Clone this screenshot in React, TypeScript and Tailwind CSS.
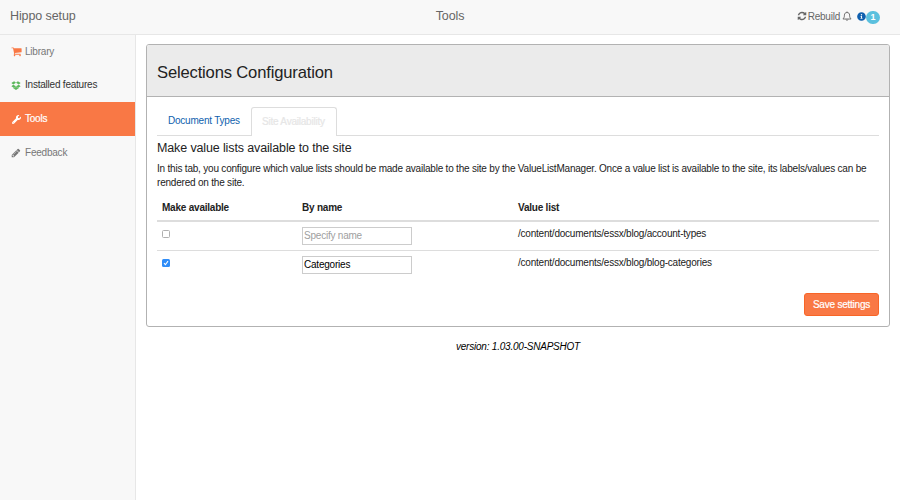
import React from "react";
import { FaWrench, FaInfoCircle } from "react-icons/fa";

type IconProps = { d: string; className: string };

function Glyph({ d, className }: IconProps) {
  return (
    <svg viewBox="0 0 1792 1792" fill="currentColor" className={className}>
      <path d={d} />
    </svg>
  );
}

const CART =
  "M704 1536q0 52-38 90t-90 38-90-38-38-90 38-90 90-38 90 38 38 90zm896 0q0 52-38 90t-90 38-90-38-38-90 38-90 90-38 90 38 38 90zm128-1088v512q0 24-16.5 42.5t-40.5 21.5l-1044 122q13 60 13 70 0 16-24 64h920q26 0 45 19t19 45-19 45-45 19h-1024q-26 0-45-19t-19-45q0-11 8-31.5t16-36 21.5-40 15.5-29.5l-177-823h-204q-26 0-45-19t-19-45 19-45 45-19h256q16 0 28.5 6.5t19.5 15.5 13 24.5 8 26 5.5 29.5 4.5 26h1201q26 0 45 19t19 45z";
const PENCIL =
  "M491 1536l91-91-235-235-91 91v107h128v128h107zm523-928q0-22-22-22-10 0-17 7l-542 542q-7 7-7 17 0 22 22 22 10 0 17-7l542-542q7-7 7-17zm-54-192l416 416-832 832h-416v-416zm683 96q0 53-37 90l-166 166-416-416 166-165q36-38 90-38 53 0 91 38l235 234q37 39 37 91z";
const REFRESH =
  "M1639 1056q0 5-1 7-64 268-268 434.5t-478 166.5q-146 0-282.5-55t-243.5-157l-129 129q-19 19-45 19t-45-19-19-45v-448q0-26 19-45t45-19h448q26 0 45 19t19 45-19 45l-137 137q71 66 161 102t187 36q134 0 250-65t186-179q11-17 53-117 8-23 30-23h192q13 0 22.5 9.5t9.5 22.5zm25-800v448q0 26-19 45t-45 19h-448q-26 0-45-19t-19-45 19-45l138-138q-148-137-349-137-134 0-250 65t-186 179q-11 17-53 117-8 23-30 23h-199q-13 0-22.5-9.5t-9.5-22.5v-7q65-268 270-434.5t480-166.5q146 0 284 55.5t245 156.5l130-129q19-19 45-19t45 19 19 45z";
const DROPBOX =
  "M402 829l494 305-342 285-490-319zM1384 1384v108l-488 293-489-293v-108l147 96 342-284 343 284zM554 206l342 285-494 304-338-270zM1390 829l338 271-489 319-343-285zM1238 206l490 319-338 270-494-304z";

function Bell({ className }: { className: string }) {
  return (
    <svg viewBox="0 0 20 20" fill="none" stroke="currentColor" strokeWidth="1.8" strokeLinejoin="round" className={className}>
      <path d="M1.8 16C4.6 13.6 4.8 11 4.8 8.2 4.8 5 6.8 3 10 3s5.2 2 5.2 5.2c0 2.800.2 5.400 3 7.800z" />
      <path d="M10 1v2M8 17c.3 2.200 3.700 2.200 4 0" />
    </svg>
  );
}

function Row({ checked, name, path }: { checked: boolean; name: string; path: string }) {
  return (
    <div className="grid h-[28px] grid-cols-[140px_216px_1fr] items-start px-[5px] pt-[5px]">
      {checked ? (
        <span className="mt-[3px] flex size-2 items-center justify-center rounded-[1.5px] bg-[#2f8df8]">
          <svg viewBox="0 0 8 8" className="size-2" fill="none" stroke="white" strokeWidth="1.1">
            <path d="M2 4.2 3.4 5.7 6 2.1" />
          </svg>
        </span>
      ) : (
        <span className="mt-[3px] size-2 rounded-[1.5px] border border-[#b0b0b0] bg-white" />
      )}
      <input
        type="text"
        defaultValue={name}
        placeholder="Specify name"
        className="h-[18px] w-[110px] border border-[#ccc] px-px pb-px text-black outline-none placeholder:text-[#a0a0a0]"
      />
      <span className="leading-[14px]">{path}</span>
    </div>
  );
}

export default function App() {
  return (
    <div className="flex h-[500px] w-[900px] flex-col overflow-hidden bg-white font-['Liberation_Sans',Arial,sans-serif] text-[10px] leading-[14px] tracking-[-0.22px] text-[#222]">
      <header className="grid h-[35px] shrink-0 grid-cols-[1fr_auto_1fr] items-center border-b border-[#e7e7e7] bg-[#f8f8f8] px-[10px] pb-[2px] text-[12.5px] tracking-[-0.1px] text-[#666]">
        <span>Hippo setup</span>
        <span>Tools</span>
        <div className="flex items-center justify-end pr-[10px] text-[10px] tracking-[-0.22px]">
          <Glyph d={REFRESH} className="mr-px size-[10px]" />
          <span className="pt-px">Rebuild</span>
          <Bell className="ml-[2px] size-[10px]" />
          <FaInfoCircle className="ml-[5px] size-[9px] text-[#0f5fae]" />
          <span className="mt-[2px] flex h-[13px] w-[14px] items-center justify-center rounded-full bg-[#5bc0de] text-[9px] font-bold text-white">
            1
          </span>
        </div>
      </header>
      <div className="flex min-h-0 flex-1">
        <nav className="w-[136px] shrink-0 border-r border-[#e7e7e7] bg-[#f8f8f8] text-[#777]">
          <a className="flex h-[33px] items-center pl-[11px]">
            <Glyph d={CART} className="mr-[3px] size-[11px] text-[#f97845]" />
            Library
          </a>
          <a className="flex h-[34px] items-center pl-[11px] text-[#333]">
            <Glyph d={DROPBOX} className="mr-[4px] size-[10px] text-[#5cb85c]" />
            Installed features
          </a>
          <a className="flex h-[34px] items-center bg-[#f97845] pl-[12px] text-white [-webkit-text-stroke:0.2px]">
            <FaWrench className="mr-[4px] size-[9px]" />
            Tools
          </a>
          <a className="flex h-[34px] items-center pl-[11px]">
            <Glyph d={PENCIL} className="mr-[4px] size-[10px]" />
            Feedback
          </a>
        </nav>
        <main className="min-w-0 flex-1 pt-[9px] pr-[10px] pl-[10px]">
          <section className="h-[283px] rounded-[3px] border border-[#b2b2b2] bg-white">
            <h1 className="flex h-[52px] items-center rounded-t-[2px] border-b border-[#b2b2b2] bg-[#ebebeb] px-[10px] pt-[4px] text-[16.6px] tracking-[-0.17px]">
              Selections Configuration
            </h1>
            <div className="px-[10px] pt-[10px]">
              <div className="flex h-[29px] border-b border-[#ddd]">
                <a className="flex w-[94px] items-center pl-[11px] text-[#0f5fae]">Document Types</a>
                <a className="flex h-[29px] w-[86px] items-center rounded-t-[3px] border border-b-0 border-[#ddd] bg-white pb-px pl-[10px] text-[#e6e6e6] [-webkit-text-stroke:0.2px]">
                  Site Availability
                </a>
              </div>
              <h2 className="mt-[5px] text-[12.5px] leading-[14px] tracking-[-0.13px]">Make value lists available to the site</h2>
              <p className="mt-[7px] mb-[-1px] w-[722px] leading-[14px] tracking-[-0.205px]">
                In this tab, you configure which value lists should be made available to the site by the ValueListManager. Once a
                value list is available to the site, its labels/values can be rendered on the site.
              </p>
              <div className="mt-[7px]">
                <div className="grid h-[26px] grid-cols-[140px_216px_1fr] border-b-2 border-[#ddd] px-[5px] pt-[5px] font-bold">
                  <span>Make available</span>
                  <span>By name</span>
                  <span>Value list</span>
                </div>
                <Row checked={false} name="" path="/content/documents/essx/blog/account-types" />
                <div className="border-t border-[#ddd]">
                  <Row checked name="Categories" path="/content/documents/essx/blog/blog-categories" />
                </div>
              </div>
              <div className="mt-[14px] flex justify-end">
                <button className="h-[23px] w-[75px] rounded-[3px] border border-[#f86527] bg-[#f97845] text-white [-webkit-text-stroke:0.2px]">
                  Save settings
                </button>
              </div>
            </div>
          </section>
          <footer className="mt-[13px] text-center italic text-black">version: 1.03.00-SNAPSHOT</footer>
        </main>
      </div>
    </div>
  );
}
